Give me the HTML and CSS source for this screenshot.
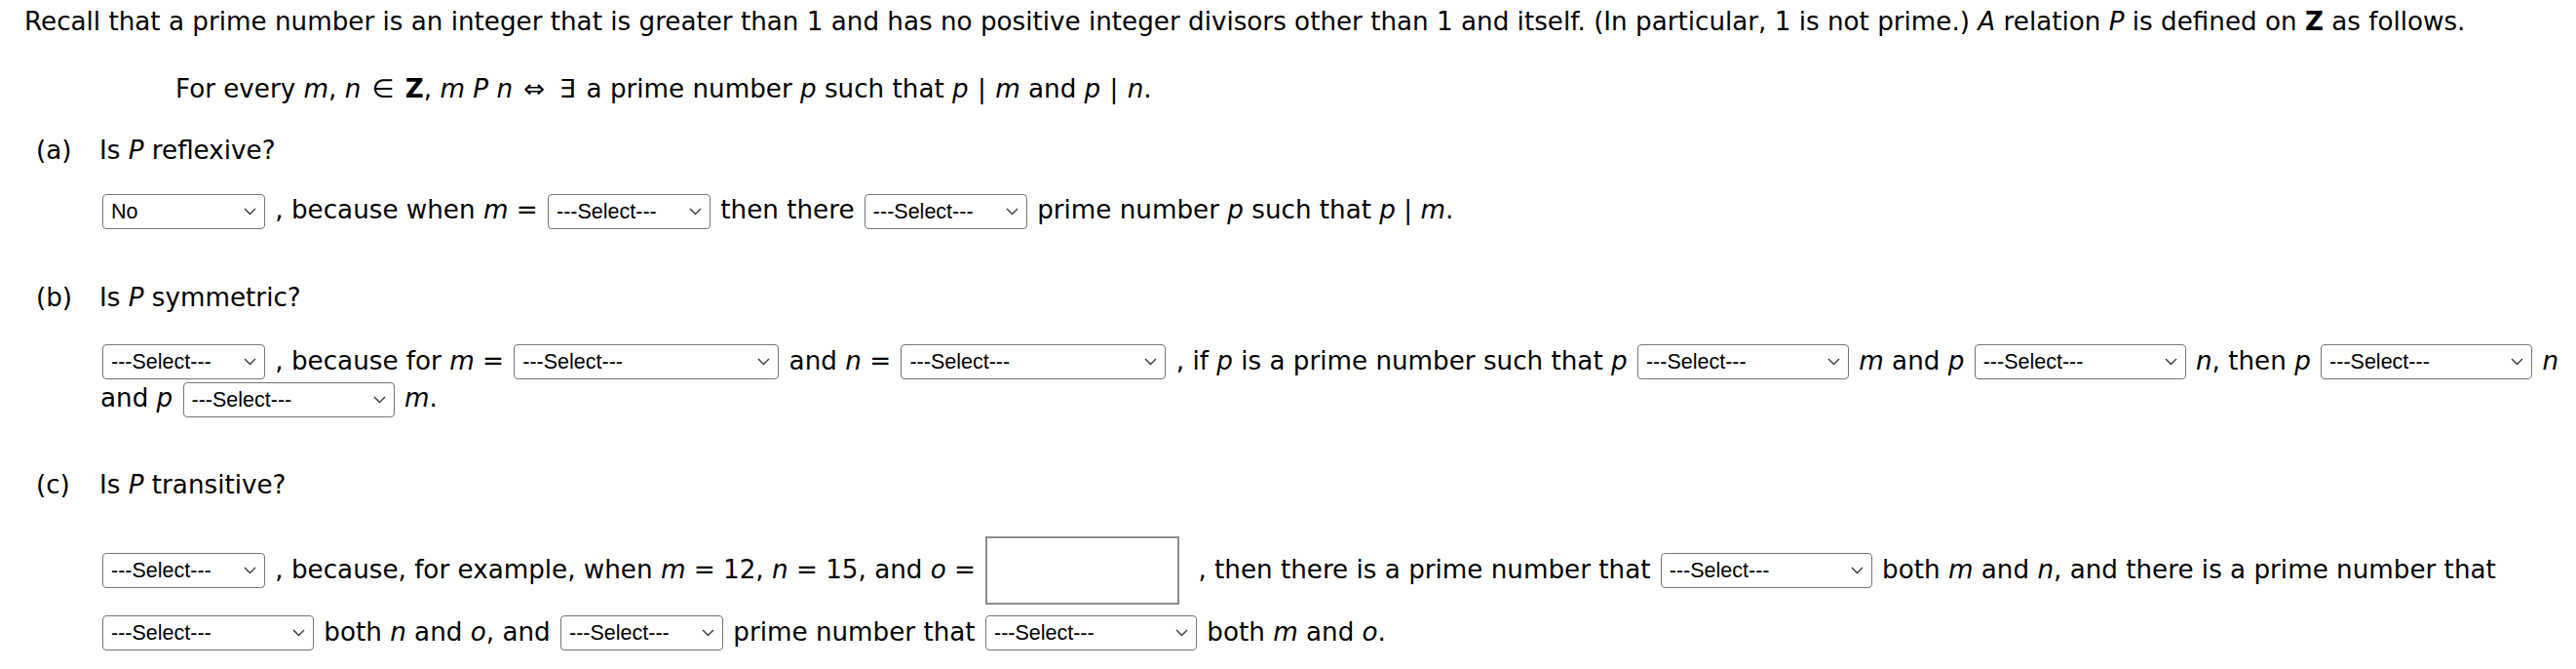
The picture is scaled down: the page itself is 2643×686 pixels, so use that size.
FILE: index.html
```html
<!DOCTYPE html>
<html lang="en">
<head>
<meta charset="utf-8">
<title>Relation P</title>
<link rel="stylesheet" href="styles.css">
</head>
<body>
<div class="page">
  <p class="intro">Recall that a prime number is an integer that is greater than 1 and has no positive integer divisors other than 1 and itself. (In particular, 1 is not prime.) <i>A</i> relation <i>P</i> is defined on <b>Z</b> as follows.</p>
  <p class="def">For every <i>m</i>, <i>n</i> <span class="op">∈</span> <b>Z</b>, <i>m P n</i> <span class="op">⇔</span> <span class="op">∃</span> a prime number <i>p</i> such that <i>p</i> <span class="bar">|</span> <i>m</i> and <i>p</i> <span class="bar">|</span> <i>n</i>.</p>

  <section class="part part-a">
    <div class="part-head"><span class="label">(a)</span><span>Is <i>P</i> reflexive?</span></div>
    <div class="answer">
      <div class="line"><span class="sel w-s"><select><option>No</option></select><svg class="chev" viewBox="0 0 13 8"><polyline points="1,1 6.5,6.5 12,1"/></svg></span> , because when <i>m</i> = <span class="sel w-s"><select><option>---Select---</option></select><svg class="chev" viewBox="0 0 13 8"><polyline points="1,1 6.5,6.5 12,1"/></svg></span> then there <span class="sel w-s"><select><option>---Select---</option></select><svg class="chev" viewBox="0 0 13 8"><polyline points="1,1 6.5,6.5 12,1"/></svg></span> prime number <i>p</i> such that <i>p</i> | <i>m</i>.</div>
    </div>
  </section>

  <section class="part part-b">
    <div class="part-head"><span class="label">(b)</span><span>Is <i>P</i> symmetric?</span></div>
    <div class="answer">
      <div class="line"><span class="sel w-s"><select><option>---Select---</option></select><svg class="chev" viewBox="0 0 13 8"><polyline points="1,1 6.5,6.5 12,1"/></svg></span> , because for <i>m</i> = <span class="sel w-l"><select><option>---Select---</option></select><svg class="chev" viewBox="0 0 13 8"><polyline points="1,1 6.5,6.5 12,1"/></svg></span> and <i>n</i> = <span class="sel w-l"><select><option>---Select---</option></select><svg class="chev" viewBox="0 0 13 8"><polyline points="1,1 6.5,6.5 12,1"/></svg></span> , if <i>p</i> is a prime number such that <i>p</i> <span class="sel w-m"><select><option>---Select---</option></select><svg class="chev" viewBox="0 0 13 8"><polyline points="1,1 6.5,6.5 12,1"/></svg></span> <i>m</i> and <i>p</i> <span class="sel w-m"><select><option>---Select---</option></select><svg class="chev" viewBox="0 0 13 8"><polyline points="1,1 6.5,6.5 12,1"/></svg></span> <i>n</i>, then <i>p</i> <span class="sel w-m"><select><option>---Select---</option></select><svg class="chev" viewBox="0 0 13 8"><polyline points="1,1 6.5,6.5 12,1"/></svg></span> <i>n</i></div>
      <div class="line">and <i>p</i> <span class="sel w-m"><select><option>---Select---</option></select><svg class="chev" viewBox="0 0 13 8"><polyline points="1,1 6.5,6.5 12,1"/></svg></span> <i>m</i>.</div>
    </div>
  </section>

  <section class="part part-c">
    <div class="part-head"><span class="label">(c)</span><span>Is <i>P</i> transitive?</span></div>
    <div class="answer">
      <div class="line"><span class="sel w-s"><select><option>---Select---</option></select><svg class="chev" viewBox="0 0 13 8"><polyline points="1,1 6.5,6.5 12,1"/></svg></span> , because, for example, when <i>m</i> = 12, <i>n</i> = 15, and <i>o</i> = <input class="num" type="text">, then there is a prime number that <span class="sel w-m"><select><option>---Select---</option></select><svg class="chev" viewBox="0 0 13 8"><polyline points="1,1 6.5,6.5 12,1"/></svg></span> both <i>m</i> and <i>n</i>, and there is a prime number that</div>
      <div class="line line-after-input"><span class="sel w-m"><select><option>---Select---</option></select><svg class="chev" viewBox="0 0 13 8"><polyline points="1,1 6.5,6.5 12,1"/></svg></span> both <i>n</i> and <i>o</i>, and <span class="sel w-s"><select><option>---Select---</option></select><svg class="chev" viewBox="0 0 13 8"><polyline points="1,1 6.5,6.5 12,1"/></svg></span> prime number that <span class="sel w-m"><select><option>---Select---</option></select><svg class="chev" viewBox="0 0 13 8"><polyline points="1,1 6.5,6.5 12,1"/></svg></span> both <i>m</i> and <i>o</i>.</div>
    </div>
  </section>
</div>
</body>
</html>
```

FILE: styles.css
```css
html, body {
  margin: 0;
  padding: 0;
  background: #ffffff;
}

body {
  font-family: "DejaVu Sans", Verdana, sans-serif;
  font-size: 26.2px;
  color: #000000;
}

.page {
  padding-top: 7px;
}

.intro {
  margin: 0;
  padding-left: 25px;
  line-height: 30px;
  white-space: nowrap;
}

.def {
  margin: 39px 0 0 0;
  padding-left: 180px;
  line-height: 30px;
}

.def .op {
  padding: 0 3px;
}

.def .bar {
  padding: 0 1px;
}

.part-head {
  display: flex;
  padding-left: 37px;
  line-height: 30px;
}

.part-head .label {
  width: 65px;
  flex: none;
}

.part-a .part-head { margin-top: 33px; }
.part-b .part-head { margin-top: 55px; }
.part-c .part-head { margin-top: 54px; }

.answer {
  padding-left: 103px;
  line-height: 38px;
}

.part-a .answer { margin-top: 27px; }
.part-b .answer { margin-top: 31px; }
.part-c .answer { margin-top: 34px; }

.line {
  white-space: nowrap;
}

.line-after-input {
  margin-top: 5px;
}

.sel {
  position: relative;
  display: inline-block;
  vertical-align: middle;
  margin: 0 2px;
  height: 36px;
}

.w-s { width: 167px; }
.w-m { width: 217px; }
.w-l { width: 272px; }

.sel select {
  -webkit-appearance: none;
  appearance: none;
  display: block;
  width: 100%;
  height: 36px;
  box-sizing: border-box;
  margin: 0;
  padding: 0 28px 0 8px;
  border: 1px solid #767676;
  border-radius: 4px;
  background: #ffffff;
  color: #000000;
  font-family: "Liberation Sans", Arial, sans-serif;
  font-size: 21.5px;
}

.chev {
  position: absolute;
  right: 9px;
  top: 50%;
  width: 13px;
  height: 8px;
  margin-top: -4px;
  fill: none;
  stroke: #3b3b3b;
  stroke-width: 1.4;
  pointer-events: none;
}

.num {
  width: 199px;
  height: 70px;
  box-sizing: border-box;
  vertical-align: middle;
  margin: 4px 19px 4px 2px;
  padding: 0 6px;
  border: 2px solid #8c8c8c;
  border-radius: 0;
  background: #ffffff;
  font-family: "DejaVu Sans", Verdana, sans-serif;
  font-size: 24px;
}
```
